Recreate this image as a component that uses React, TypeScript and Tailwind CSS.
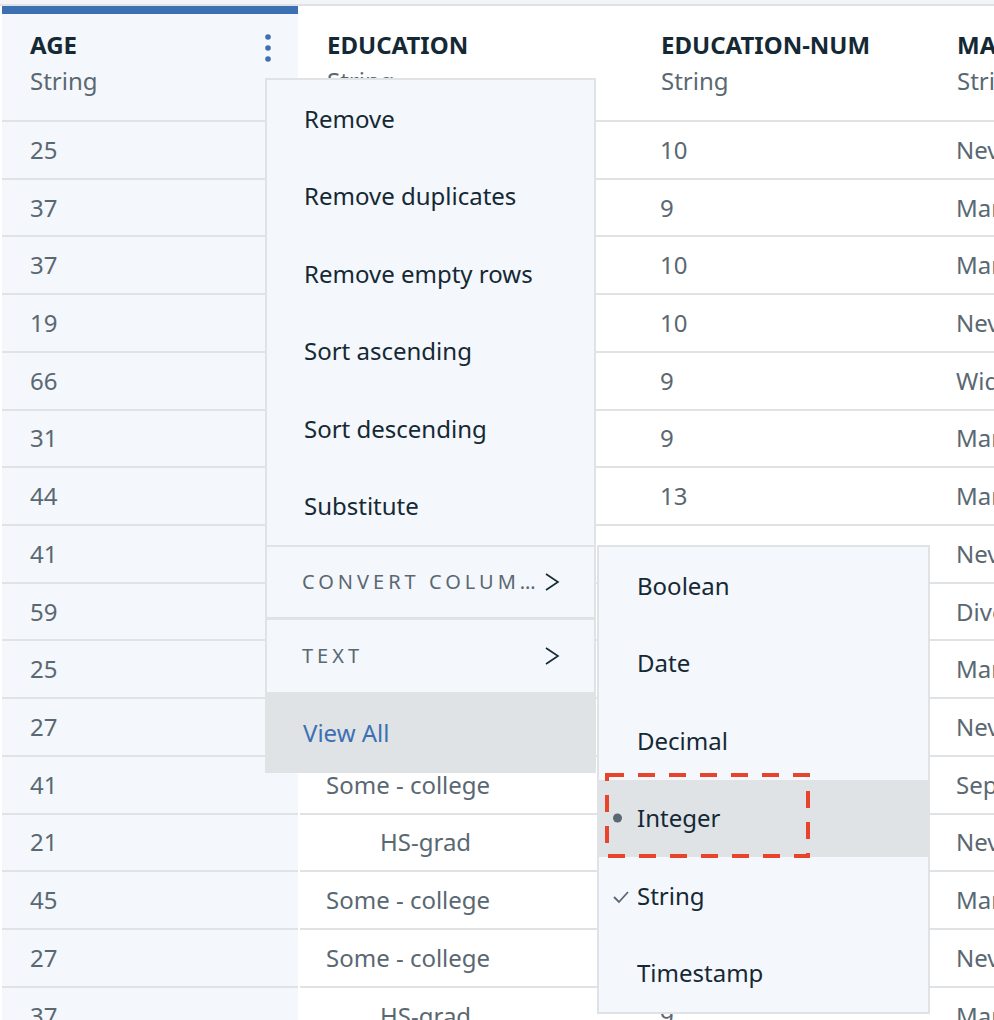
import { ReactNode } from 'react';

const rows = [
  ['25', 'Some - college', '10', 'Never-married'],
  ['37', 'HS-grad', '9', 'Married-civ-spouse'],
  ['37', 'Some - college', '10', 'Married-civ-spouse'],
  ['19', 'Some - college', '10', 'Never-married'],
  ['66', 'HS-grad', '9', 'Widowed'],
  ['31', 'HS-grad', '9', 'Married-civ-spouse'],
  ['44', 'Bachelors', '13', 'Married-civ-spouse'],
  ['41', 'Some - college', '10', 'Never-married'],
  ['59', 'HS-grad', '9', 'Divorced'],
  ['25', 'HS-grad', '9', 'Married-civ-spouse'],
  ['27', 'Some - college', '10', 'Never-married'],
  ['41', 'Some - college', '10', 'Separated'],
  ['21', 'HS-grad', '9', 'Never-married'],
  ['45', 'Some - college', '10', 'Married-civ-spouse'],
  ['27', 'Some - college', '10', 'Never-married'],
  ['37', 'HS-grad', '9', 'Married-civ-spouse'],
];

function Kebab() {
  return (
    <svg width="8" height="30" viewBox="0 0 8 30" className="mt-[3px]">
      <circle cx="4" cy="4" r="2.8" fill="#3d70b2" />
      <circle cx="4" cy="15" r="2.8" fill="#3d70b2" />
      <circle cx="4" cy="26" r="2.8" fill="#3d70b2" />
    </svg>
  );
}

function Chevron() {
  return (
    <svg width="16" height="20" viewBox="0 0 16 20" className="ml-auto">
      <polyline points="2,2 14,10 2,18" fill="none" stroke="#152935" strokeWidth="1.6" />
    </svg>
  );
}

function Column({
  title,
  width,
  shaded,
  idx,
  extra,
  cellPad,
}: {
  title: string;
  width: string;
  shaded?: boolean;
  idx: number;
  extra?: ReactNode;
  cellPad?: (v: string) => string;
}) {
  const bg = shaded ? 'bg-[#f4f7fb]' : 'bg-white';
  return (
    <div className={`flex flex-col shrink-0 ${width}`}>
      <div
        className={`h-[116px] border-b-2 border-[#dfe3e6] pl-[27px] pt-[16px] ${bg} ${
          shaded ? 'border-t-8 border-t-[#3d70b2] pl-[28px] pr-[26px]' : 'border-t-8 border-t-white'
        }`}
      >
        <div className="flex justify-between">
          <div>
            <div className="text-[24px] leading-[30px] font-bold text-[#152935] whitespace-nowrap">{title}</div>
            <div className="text-[24px] leading-[30px] mt-[6px] text-[#5a6872]">String</div>
          </div>
          {extra}
        </div>
      </div>
      {rows.map((r, i) => (
        <div
          key={i}
          className={`h-[57.73px] shrink-0 border-b-2 border-[#dfe3e6] flex items-center text-[24px] text-[#5a6872] whitespace-nowrap ${bg} ${
            shaded ? 'pl-[28px]' : 'pl-[26px]'
          }`}
        >
          <span className={cellPad ? cellPad(r[idx]) : ''}>{r[idx]}</span>
        </div>
      ))}
    </div>
  );
}

const menuItems = ['Remove', 'Remove duplicates', 'Remove empty rows', 'Sort ascending', 'Sort descending', 'Substitute'];
const types = ['Boolean', 'Date', 'Decimal', 'Integer', 'String', 'Timestamp'];

export default function App() {
  return (
    <div className="relative h-[1020px] w-[994px] overflow-hidden bg-white font-['Noto_Sans',sans-serif]">
      <div className="h-[6px] bg-[#f2f4f8] border-b-2 border-[#dfe3e6]" />
      <div className="flex">
        <div className="w-[2px] shrink-0" />
        <Column title="AGE" width="w-[296px]" shaded idx={0} extra={<Kebab />} />
        <div className="w-[2px] shrink-0" />
        <Column
          title="EDUCATION"
          width="w-[334px]"
          idx={1}
          cellPad={(v) => (v === 'HS-grad' ? 'pl-[54px]' : '')}
        />
        <Column title="EDUCATION-NUM" width="w-[296px]" idx={2} />
        <Column title="MARITAL-STATUS" width="w-[300px]" idx={3} />
      </div>

      {/* column menu */}
      <div className="absolute left-[265px] top-[78px] w-[331px] border-2 border-b-0 border-[#dfe3e6] bg-[#f4f7fb]">
        {menuItems.map((m) => (
          <div key={m} className="h-[77.5px] flex items-center pl-[37px] text-[24px] text-[#152935]">
            {m}
          </div>
        ))}
        <div className="h-[72px] border-t-2 border-[#dfe3e6] flex items-center pl-[35px] pr-[34px]">
          <span className="text-[20px] tracking-[0.2em] text-[#5a6872]">CONVERT COLUM…</span>
          <Chevron />
        </div>
        <div className="h-[75px] border-t-[3px] border-[#dfe3e6] flex items-center pl-[35px] pr-[34px]">
          <span className="text-[20px] tracking-[0.2em] text-[#5a6872]">TEXT</span>
          <Chevron />
        </div>
        <div className="h-[81px] -mx-[2px] bg-[#dfe3e6] flex items-center pl-[38px] text-[24px] text-[#3d70b2]">
          View All
        </div>
      </div>

      {/* convert submenu */}
      <div className="absolute left-[597px] top-[545px] w-[333px] border-2 border-[#dfe3e6] bg-[#f4f7fb]">
        {types.map((t) => (
          <div
            key={t}
            className={`h-[77.5px] flex items-center text-[24px] text-[#152935] ${
              t === 'Integer' ? 'bg-[#dfe3e6] -mx-[2px] pl-[40px]' : 'pl-[38px]'
            } relative`}
          >
            {t === 'Integer' && (
              <span className="absolute left-[16px] top-1/2 -translate-y-1/2 w-[9px] h-[9px] rounded-full bg-[#5a6872]" />
            )}
            {t === 'String' && (
              <svg width="16" height="14" viewBox="0 0 16 14" className="absolute left-[14px] top-[33px]">
                <polyline points="1,7 6,12 15,2" fill="none" stroke="#5a6872" strokeWidth="1.8" />
              </svg>
            )}
            {t}
          </div>
        ))}
      </div>

      {/* highlight annotation */}
      <svg className="absolute left-[605px] top-[773px]" width="205" height="85" viewBox="0 0 205 85">
        <rect
          x="2"
          y="2"
          width="201"
          height="81"
          fill="none"
          stroke="#e8432b"
          strokeWidth="4"
          strokeDasharray="17 14"
        />
      </svg>
    </div>
  );
}
